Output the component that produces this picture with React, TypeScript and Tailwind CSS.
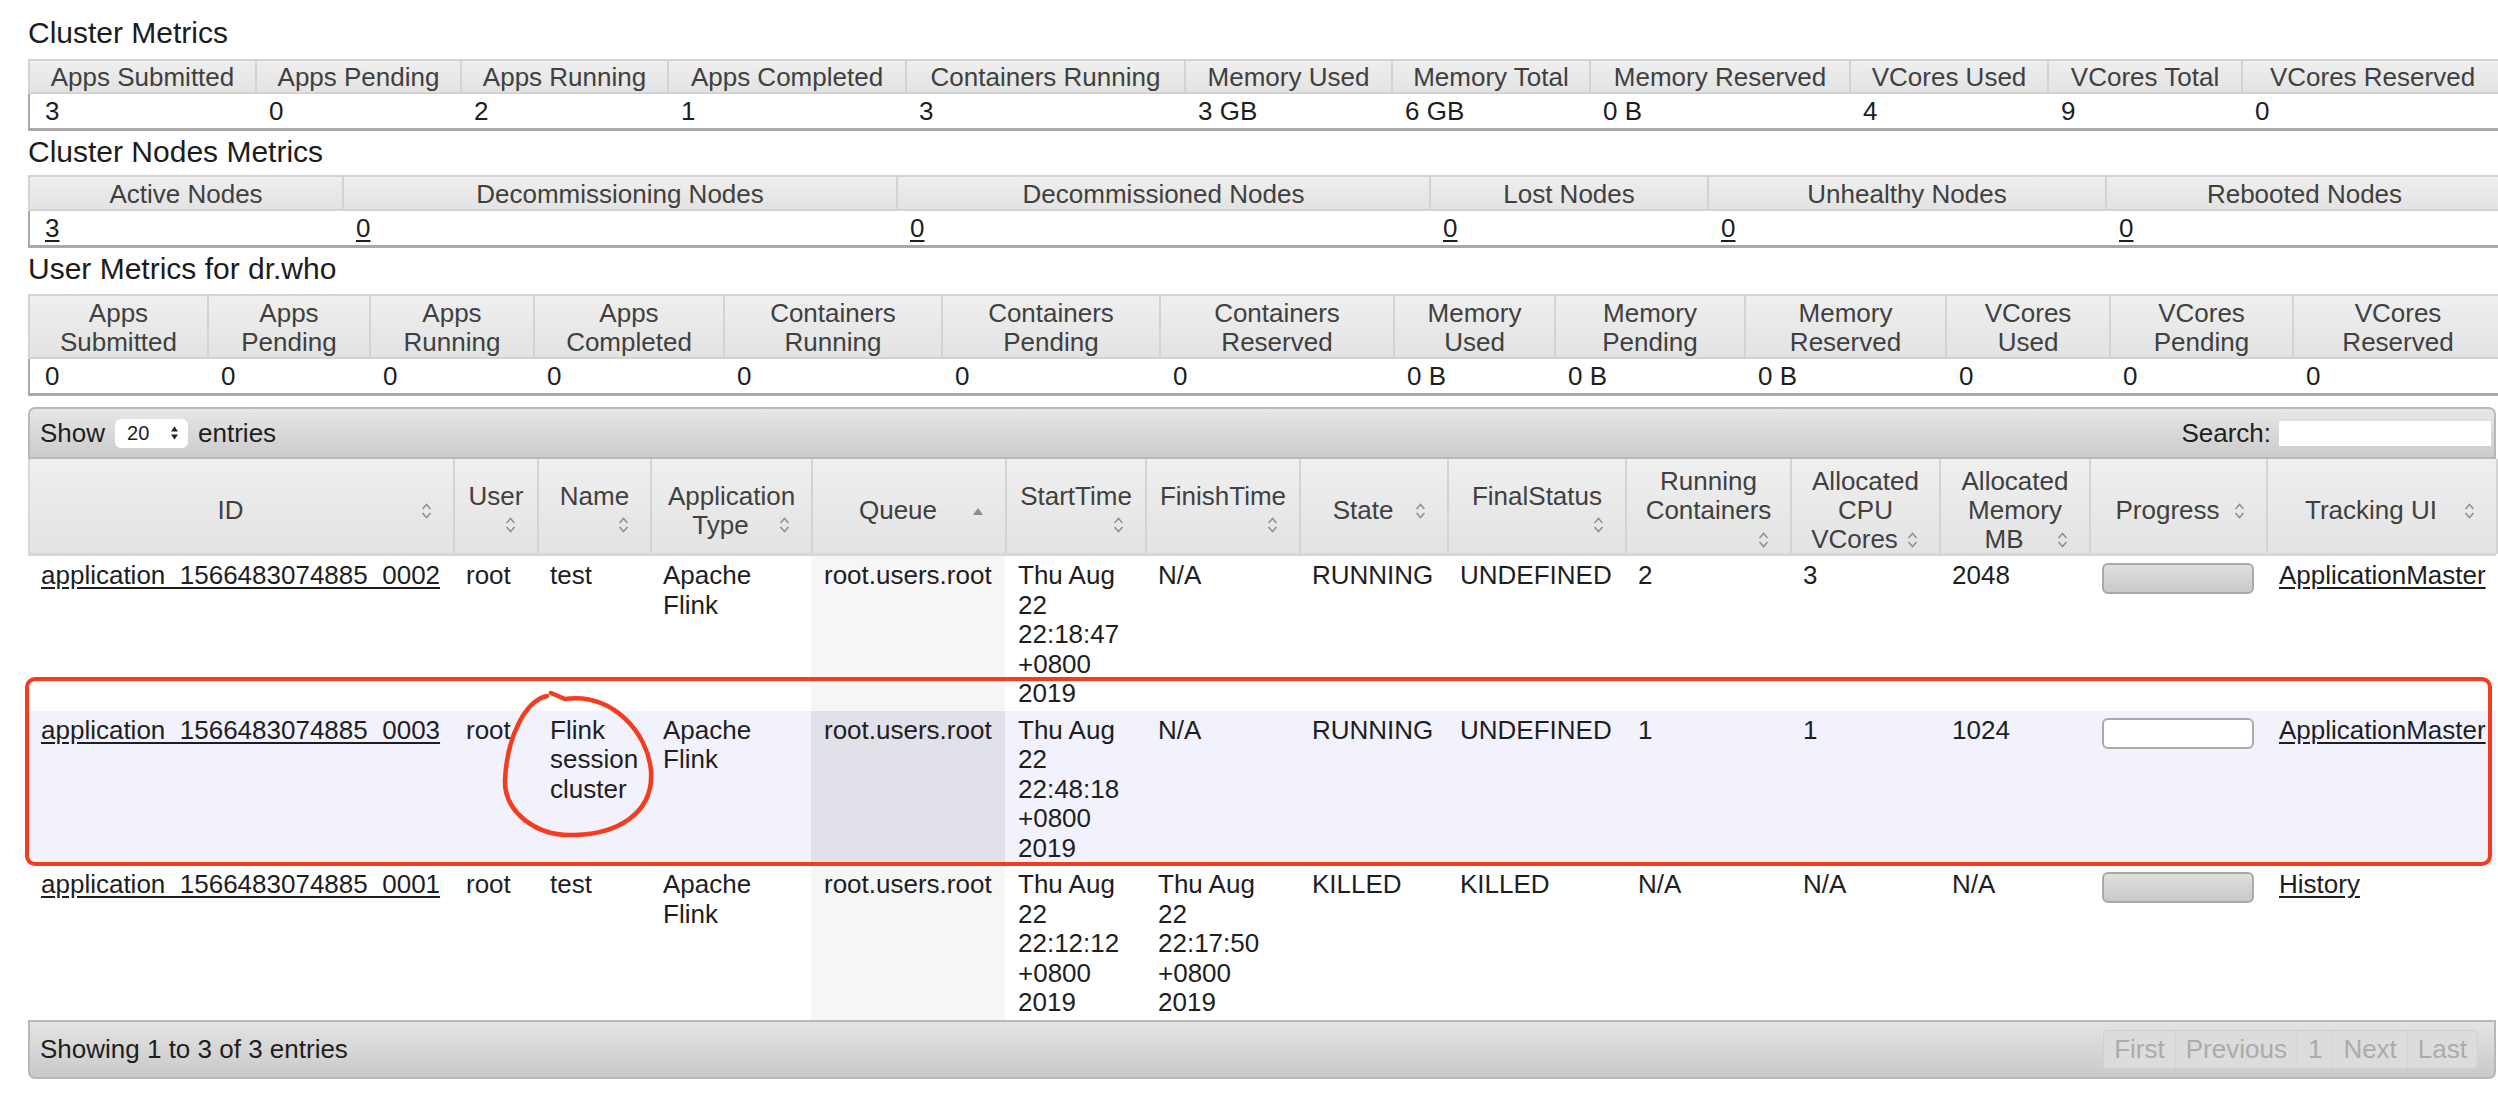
import React from "react";

const SortIcon = () => (
  <svg width="11" height="17" viewBox="0 0 11 17" className="block">
    <path d="M1.5 6.5 L5.5 2 L9.5 6.5" fill="none" stroke="#8f8f8f" strokeWidth="1.5" />
    <path d="M1.5 10.5 L5.5 15 L9.5 10.5" fill="none" stroke="#8f8f8f" strokeWidth="1.5" />
  </svg>
);

const AscIcon = () => (
  <svg width="12" height="10" viewBox="0 0 12 10" className="block">
    <path d="M1 9 L6 2 L11 9 Z" fill="#8c8c8c" />
  </svg>
);

interface MetricsProps {
  cols: string;
  headers: string[][];
  values: string[];
  links?: boolean;
  headerH: string;
}

const MetricsTable: React.FC<MetricsProps> = ({ cols, headers, values, links, headerH }) => (
  <div className="w-[2476px]">
    <div className={`grid ${cols}`}>
      {headers.map((h, i) => (
        <div
          key={i}
          className={`${headerH} flex flex-col items-center justify-center pt-[2px] text-[#404040] leading-[29px] bg-linear-to-b from-[#efefef] to-[#e3e3e3] border-t-2 border-r-2 border-b-2 border-[#d3d3d3] ${
            i === 0 ? "border-l-2" : ""
          }`}
        >
          {h.map((l, j) => (
            <div key={j} className="whitespace-nowrap">
              {l}
            </div>
          ))}
        </div>
      ))}
    </div>
    <div className={`grid ${cols}`}>
      {values.map((v, i) => (
        <div
          key={i}
          className={`h-[37px] flex items-center pl-[12px] border-b-[3px] border-[#a9a9a9] ${
            i === 0 ? "border-l-2 border-l-[#a9a9a9] pl-[15px]" : ""
          }`}
        >
          <span className={links ? "underline underline-offset-[3px]" : ""}>{v}</span>
        </div>
      ))}
    </div>
  </div>
);

const Title: React.FC<{ children: React.ReactNode; className?: string }> = ({ children, className }) => (
  <h3 className={`text-[30px] leading-[36px] text-[#1c1c1c] ${className || ""}`}>{children}</h3>
);

type IconPos = "same" | "below" | "asc";

const appCols: Array<{ lines: string[]; icon: IconPos }> = [
  { lines: ["ID"], icon: "same" },
  { lines: ["User"], icon: "below" },
  { lines: ["Name"], icon: "below" },
  { lines: ["Application", "Type"], icon: "same" },
  { lines: ["Queue"], icon: "asc" },
  { lines: ["StartTime"], icon: "below" },
  { lines: ["FinishTime"], icon: "below" },
  { lines: ["State"], icon: "same" },
  { lines: ["FinalStatus"], icon: "below" },
  { lines: ["Running", "Containers"], icon: "below" },
  { lines: ["Allocated", "CPU", "VCores"], icon: "same" },
  { lines: ["Allocated", "Memory", "MB"], icon: "same" },
  { lines: ["Progress"], icon: "same" },
  { lines: ["Tracking UI"], icon: "same" },
];

const apps = [
  {
    id: "application_1566483074885_0002",
    user: "root",
    name: "test",
    type: "Apache Flink",
    queue: "root.users.root",
    start: "Thu Aug 22 22:18:47 +0800 2019",
    finish: "N/A",
    state: "RUNNING",
    final: "UNDEFINED",
    containers: "2",
    cpu: "3",
    mem: "2048",
    filled: true,
    tracking: "ApplicationMaster",
    odd: false,
  },
  {
    id: "application_1566483074885_0003",
    user: "root",
    name: "Flink session cluster",
    type: "Apache Flink",
    queue: "root.users.root",
    start: "Thu Aug 22 22:48:18 +0800 2019",
    finish: "N/A",
    state: "RUNNING",
    final: "UNDEFINED",
    containers: "1",
    cpu: "1",
    mem: "1024",
    filled: false,
    tracking: "ApplicationMaster",
    odd: true,
  },
  {
    id: "application_1566483074885_0001",
    user: "root",
    name: "test",
    type: "Apache Flink",
    queue: "root.users.root",
    start: "Thu Aug 22 22:12:12 +0800 2019",
    finish: "Thu Aug 22 22:17:50 +0800 2019",
    state: "KILLED",
    final: "KILLED",
    containers: "N/A",
    cpu: "N/A",
    mem: "N/A",
    filled: true,
    tracking: "History",
    odd: false,
  },
];

const appGrid =
  "grid grid-cols-[425px_84px_113px_161px_194px_140px_154px_148px_178px_165px_149px_150px_177px_230px]";

const HeaderCell: React.FC<{ lines: string[]; icon: IconPos }> = ({ lines, icon }) => (
  <div className="flex flex-col items-center justify-center pt-[8px] border-r-2 border-[#d3d3d3] text-[#404040] leading-[29px]">
    {lines.map((l, i) => {
      const last = i === lines.length - 1;
      if (last && (icon === "same" || icon === "asc")) {
        return (
          <div key={i} className="relative self-stretch text-center whitespace-nowrap pr-[22px]">
            {l}
            <span className="absolute right-[21px] top-1/2 -translate-y-1/2">
              {icon === "asc" ? <AscIcon /> : <SortIcon />}
            </span>
          </div>
        );
      }
      return (
        <div key={i} className="text-center whitespace-nowrap">
          {l}
        </div>
      );
    })}
    {icon === "below" && (
      <div className="relative self-stretch h-[29px]">
        <span className="absolute right-[21px] top-1/2 -translate-y-1/2">
          <SortIcon />
        </span>
      </div>
    )}
  </div>
);

const Cell: React.FC<{ children?: React.ReactNode; className?: string }> = ({ children, className }) => (
  <div className={`pl-[13px] pt-[5px] pb-[2px] leading-[29.5px] ${className || "pr-[13px]"}`}>{children}</div>
);

export default function App() {
  return (
    <div className="relative w-[2498px] h-[1114px] overflow-hidden bg-white text-[26px] text-[#1e1e1e] font-['Liberation_Sans',Helvetica,Arial,sans-serif]">
      <div className="pl-[28px]">
        <Title className="pt-[15px] pb-[8px]">Cluster Metrics</Title>
        <MetricsTable
          cols="grid-cols-[229px_205px_207px_238px_279px_207px_198px_260px_198px_194px_1fr]"
          headerH="h-[35px]"
          headers={[
            ["Apps Submitted"],
            ["Apps Pending"],
            ["Apps Running"],
            ["Apps Completed"],
            ["Containers Running"],
            ["Memory Used"],
            ["Memory Total"],
            ["Memory Reserved"],
            ["VCores Used"],
            ["VCores Total"],
            ["VCores Reserved"],
          ]}
          values={["3", "0", "2", "1", "3", "3 GB", "6 GB", "0 B", "4", "9", "0"]}
        />

        <Title className="mt-[3px] mb-[5px]">Cluster Nodes Metrics</Title>
        <MetricsTable
          cols="grid-cols-[316px_554px_533px_278px_398px_1fr]"
          headerH="h-[36px]"
          headers={[
            ["Active Nodes"],
            ["Decommissioning Nodes"],
            ["Decommissioned Nodes"],
            ["Lost Nodes"],
            ["Unhealthy Nodes"],
            ["Rebooted Nodes"],
          ]}
          values={["3", "0", "0", "0", "0", "0"]}
          links
        />

        <Title className="mt-[3px] mb-[7px]">User Metrics for dr.who</Title>
        <MetricsTable
          cols="grid-cols-[181px_162px_164px_190px_218px_218px_234px_161px_190px_201px_164px_183px_1fr]"
          headerH="h-[65px]"
          headers={[
            ["Apps", "Submitted"],
            ["Apps", "Pending"],
            ["Apps", "Running"],
            ["Apps", "Completed"],
            ["Containers", "Running"],
            ["Containers", "Pending"],
            ["Containers", "Reserved"],
            ["Memory", "Used"],
            ["Memory", "Pending"],
            ["Memory", "Reserved"],
            ["VCores", "Used"],
            ["VCores", "Pending"],
            ["VCores", "Reserved"],
          ]}
          values={["0", "0", "0", "0", "0", "0", "0", "0 B", "0 B", "0 B", "0", "0", "0"]}
        />

        {/* applications datatable */}
        <div className="mt-[11px] w-[2468px]">
          <div className="flex items-center justify-between h-[52px] border-2 border-[#b8b8b8] rounded-t-[7px] bg-linear-to-b from-[#e7e7e7] to-[#cbcbcb] pl-[10px] pr-[3px]">
            <div className="flex items-center">
              <span>Show</span>
              <div className="mx-[10px] w-[73px] h-[29px] bg-white rounded-[6px] flex items-center justify-between pl-[12px] pr-[9px] text-[20px]">
                <span>20</span>
                <svg width="9" height="16" viewBox="0 0 9 16">
                  <path d="M1 6.5 L4.5 1.5 L8 6.5 Z" fill="#222" />
                  <path d="M1 9.5 L4.5 14.5 L8 9.5 Z" fill="#222" />
                </svg>
              </div>
              <span>entries</span>
            </div>
            <div className="flex items-center">
              <span>Search:</span>
              <div className="ml-[8px] w-[212px] h-[25px] bg-white" />
            </div>
          </div>

          <div className={`${appGrid} h-[97px] border-l-2 border-b-[3px] border-[#d8d8d8] bg-linear-to-b from-[#efefef] to-[#e3e3e3]`}>
            {appCols.map((c, i) => (
              <HeaderCell key={i} lines={c.lines} icon={c.icon} />
            ))}
          </div>

          {apps.map((a, i) => (
            <div key={i} className={`${appGrid} ${a.odd ? "bg-[#f2f2fd]" : "bg-white"}`}>
              <Cell>
                <span className="underline underline-offset-[3px]">{a.id}</span>
              </Cell>
              <Cell>{a.user}</Cell>
              <Cell className="pr-[8px]">{a.name}</Cell>
              <Cell>{a.type}</Cell>
              <Cell className={`pr-[8px] ${a.odd ? "bg-[#e1e1ea]" : "bg-[#f6f6f6]"}`}>{a.queue}</Cell>
              <Cell>{a.start}</Cell>
              <Cell className="pr-[16px]">{a.finish}</Cell>
              <Cell>{a.state}</Cell>
              <Cell className="pr-[6px]">{a.final}</Cell>
              <Cell>{a.containers}</Cell>
              <Cell>{a.cpu}</Cell>
              <Cell>{a.mem}</Cell>
              <Cell>
                <div
                  className={`mt-[2px] w-[152px] h-[31px] rounded-[6px] border-2 border-[#a9a9a9] ${
                    a.filled ? "bg-linear-to-b from-[#dfdfdf] to-[#c9c9c9]" : "bg-white"
                  }`}
                />
              </Cell>
              <Cell className="pr-[2px]">
                <span className="underline underline-offset-[3px]">{a.tracking}</span>
              </Cell>
            </div>
          ))}

          <div className="flex items-center justify-between h-[59px] border-2 border-[#b8b8b8] rounded-b-[7px] bg-linear-to-b from-[#e4e4e4] to-[#c9c9c9] pl-[10px] pr-[16px]">
            <span>Showing 1 to 3 of 3 entries</span>
            <div className="flex h-[39px] rounded-[4px] border border-[#d0d0d0] bg-[#dcdcdc] text-[#ababab]">
              {["First", "Previous", "1", "Next", "Last"].map((p, i) => (
                <div
                  key={p}
                  className={`flex items-center px-[10px] ${i < 4 ? "border-r border-[#d2d2d2]" : ""}`}
                >
                  {p}
                </div>
              ))}
            </div>
          </div>
        </div>
      </div>

      {/* red annotations drawn over the screenshot */}
      <div className="absolute left-[25px] top-[677px] w-[2467px] h-[189px] border-[4px] border-[#f63c1e] rounded-[10px] pointer-events-none" />
      <svg
        className="absolute left-[495px] top-[685px] pointer-events-none"
        width="170"
        height="160"
        viewBox="0 0 170 160"
      >
        <path
          d="M52 11 C30 16, 12 52, 10 95 C9 126, 40 152, 80 150 C120 149, 159 130, 156 86 C153 48, 118 8, 70 14 L56 8"
          fill="none"
          stroke="#f63c1e"
          strokeWidth="4.5"
          strokeLinecap="round"
        />
      </svg>
    </div>
  );
}
